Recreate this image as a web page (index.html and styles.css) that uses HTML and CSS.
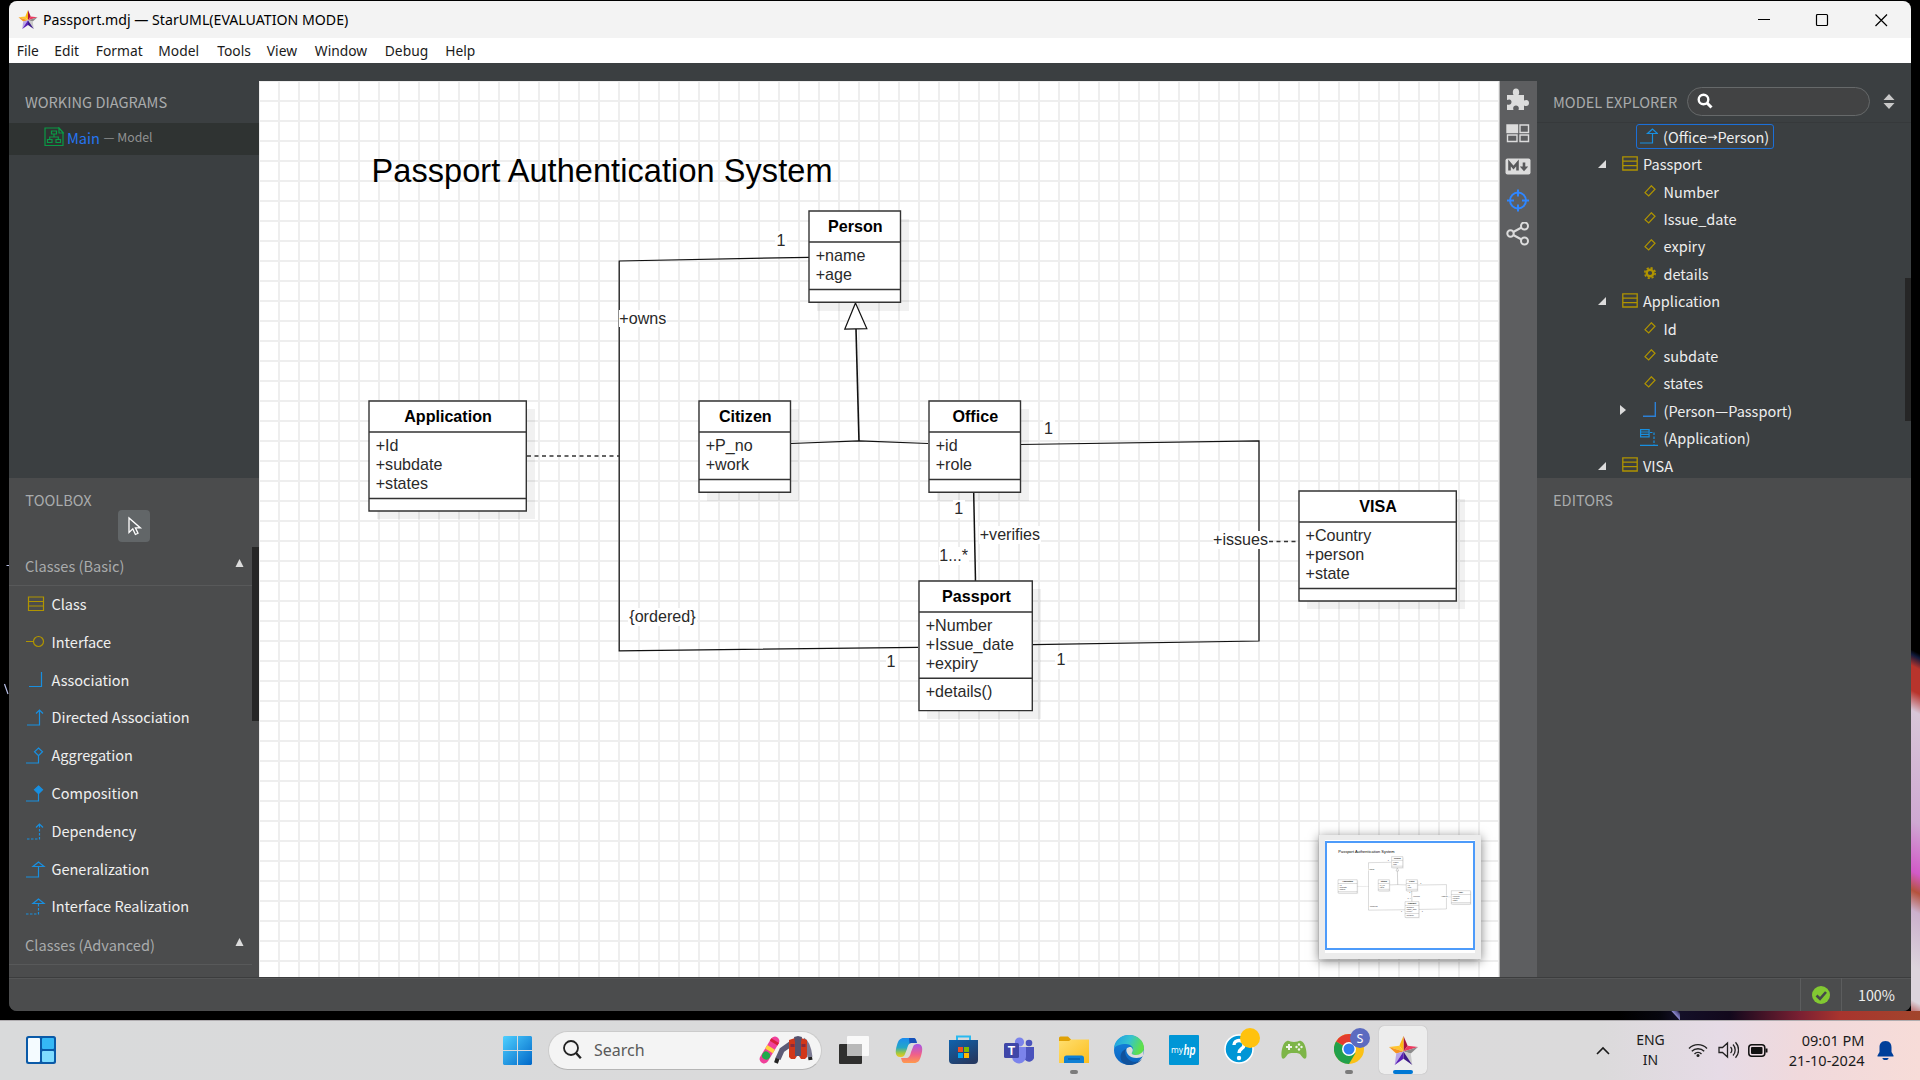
FILE: index.html
```html
<!DOCTYPE html>
<html lang="en">
<head>
<meta charset="utf-8">
<title>Passport.mdj — StarUML</title>
<link rel="stylesheet" href="styles.css">
</head>
<body>
<svg width="0" height="0" class="defs" aria-hidden="true">
  <defs>
    <linearGradient id="gWin" x1="0" y1="0" x2="1" y2="1"><stop offset="0" stop-color="#4fd0ff"/><stop offset="1" stop-color="#0067c8"/></linearGradient>
    <linearGradient id="gStore" x1="0" y1="0" x2=".6" y2="1"><stop offset="0" stop-color="#0f63ae"/><stop offset="1" stop-color="#253a63"/></linearGradient>
    <linearGradient id="gFold" x1="0" y1="0" x2="1" y2="1"><stop offset="0" stop-color="#ffdf70"/><stop offset="1" stop-color="#fcbe1e"/></linearGradient>
    <linearGradient id="gEdge" x1="0" y1="0" x2="1" y2=".3"><stop offset="0" stop-color="#1b9be6"/><stop offset=".55" stop-color="#35c3cf"/><stop offset="1" stop-color="#5fe04a"/></linearGradient>
    <linearGradient id="gEdge2" x1="0" y1="0" x2="0" y2="1"><stop offset="0" stop-color="#1687e0"/><stop offset="1" stop-color="#0b63c0"/></linearGradient>
    <linearGradient id="gCopA" x1="0" y1="0" x2="0" y2="1"><stop offset="0" stop-color="#1a8bf0"/><stop offset=".5" stop-color="#25a7c6"/><stop offset=".8" stop-color="#a5c93c"/><stop offset="1" stop-color="#f2c525"/></linearGradient>
    <linearGradient id="gCopB" x1="0" y1="0" x2="0" y2="1"><stop offset="0" stop-color="#a656e8"/><stop offset=".55" stop-color="#f0608a"/><stop offset="1" stop-color="#ff9a4c"/></linearGradient>
    <symbol id="star" viewBox="0 0 28 28">
      <path d="M14 0 18 9.500 14 15z" fill="#a8123f"/><path d="M14 0 10 9.500 14 15z" fill="#fdb913"/>
      <path d="M0 10.500 10 9.500 14 15z" fill="#ffc52e"/><path d="M0 10.500 7 17 14 15z" fill="#f7941e"/>
      <path d="M28 10.500 18 9.500 14 15z" fill="#ee3a5f"/><path d="M28 10.500 21 17 14 15z" fill="#8b8b8b"/>
      <path d="M5.500 28 7 17 14 15z" fill="#b9a5e6"/><path d="M5.500 28 14 22 14 15z" fill="#5a1fb8"/>
      <path d="M22.500 28 21 17 14 15z" fill="#c9c9c9"/><path d="M22.500 28 14 22 14 15z" fill="#3c1a86"/>
    </symbol>
    <symbol id="i-class" viewBox="0 0 16 15"><path d="M.8.800h14.400v13.200H.8zM.8 5.200h14.400M.8 9.600h14.400" fill="none" stroke="#b09400" stroke-width="1.300"/></symbol>
    <symbol id="i-attr" viewBox="0 0 12 12"><path d="M7.300.800 11 4.200 4.700 11 1 7.600z" fill="none" stroke="#b09400" stroke-width="1.200"/></symbol>
    <symbol id="i-gen" viewBox="0 0 18 16"><path d="M0 15h12.500V5.500M12.500 1 7.500 5.500h10z" fill="none" stroke="#188fe0" stroke-width="1.200"/></symbol>
    <symbol id="i-assoc" viewBox="0 0 13 15"><path d="M0 14.200h12.300V0" fill="none" stroke="#2c80d6" stroke-width="1.400"/></symbol>
    <symbol id="open" viewBox="0 0 8 8"><path d="M8 0v8H0z" fill="#dcdcdc"/></symbol>
    <symbol id="up" viewBox="0 0 9 9"><path d="M4.500 0 9 9H0z" fill="#dcdcdc"/></symbol>
  </defs>
</svg>
<svg class="wall-left" width="9" height="250" fill="none" stroke="#b9c0e8" stroke-width="1.200"><path d="M6.500 5.500H9M4.500 124l3.500 10M8.500 251v3"/></svg>

<div class="window">
  <header class="titlebar">
    <svg class="app-icon" width="20" height="19"><use href="#star"/></svg>
    <span class="title">Passport.mdj — StarUML(EVALUATION MODE)</span>
    <div class="controls">
      <svg width="14" height="14"><path d="M1 6.500h12" stroke="#000" stroke-width="1.200"/></svg>
      <svg width="14" height="14"><rect x="1.500" y="1.500" width="11" height="11" rx="1" fill="none" stroke="#000" stroke-width="1.200"/></svg>
      <svg width="14" height="14"><path d="M1.500 1.500l11.500 11.500M13 1.500 1.500 13" stroke="#000" stroke-width="1.200"/></svg>
    </div>
  </header>
  <nav class="menubar"><span>File</span><span>Edit</span><span>Format</span><span>Model</span><span>Tools</span><span>View</span><span>Window</span><span>Debug</span><span>Help</span></nav>

  <main class="body">
    <aside class="left">
      <section class="working">
        <h2>WORKING DIAGRAMS</h2>
        <div class="wd-row">
          <svg width="20" height="20" fill="none" stroke="#0a9a45" stroke-width="1.200"><path d="M15 1H1v17.500h18V6M15 1v5h4.500zM15 1l4.500 5" /><path d="M7.500 4h5v3h-5zM3.500 12.500h4.500v3H3.500zM12 12.500h4.500v3H12zM10 7v3M5.700 12.500V10h8.600v2.500"/></svg>
          <span class="main">Main</span><span class="model">— Model</span>
        </div>
      </section>
      <section class="toolbox">
        <h2>TOOLBOX</h2>
        <div class="cursor"><svg width="16" height="20"><path d="M2 2v14.500l3.800-3.600 2.600 5.600 2.600-1.200-2.600-5.400h5z" fill="none" stroke="#fff" stroke-width="1.300"/></svg></div>
        <div class="tools">
          <h3>Classes (Basic)<svg width="9" height="8"><use href="#up"/></svg></h3>
          <ul>
            <li><svg viewBox="0 0 20 18"><path d="M2.500 2h15v13.500h-15zM2.500 6.500h15M2.500 11h15" stroke="#b09400"/></svg>Class</li>
            <li><svg viewBox="0 0 20 18"><path d="M0 8.500h7M17.500 8.500a5 5 0 1 1-10 0 5 5 0 0 1 10 0z" stroke="#b09400"/></svg>Interface</li>
            <li><svg viewBox="0 0 20 18"><path d="M3 15.500h12.500V1"/></svg>Association</li>
            <li><svg viewBox="0 0 20 18"><path d="M1 17h12.500V2M10 5.500 13.500 2 17 5.500"/></svg>Directed Association</li>
            <li><svg viewBox="0 0 20 18"><path d="M0 17h12.500V9.500M12.500 2l4 3.800-4 3.800-4-3.800z"/></svg>Aggregation</li>
            <li><svg viewBox="0 0 20 18"><path d="M0 17h12.500V9.500"/><path d="M12.500 2l4 3.800-4 3.800-4-3.800z" fill="#188fe0"/></svg>Composition</li>
            <li><svg viewBox="0 0 20 18"><path d="M1 17h12.500V2" stroke-dasharray="2.500 1.500"/><path d="M10 5.500 13.500 2 17 5.500"/></svg>Dependency</li>
            <li><svg viewBox="0 0 20 18"><path d="M0 17h12.500V6.500M12.500 2 7 6.500h11z"/></svg>Generalization</li>
            <li><svg viewBox="0 0 20 18"><path d="M0 17h12.500V6.500" stroke-dasharray="2.500 1.500"/><path d="M12.500 2 7 6.500h11z"/></svg>Interface Realization</li>
          </ul>
          <h3 class="adv">Classes (Advanced)<svg width="9" height="8"><use href="#up"/></svg></h3>
          <i class="thumb"></i>
        </div>
      </section>
    </aside>

    <div class="canvas">
      <svg class="diagram" viewBox="259 81 1240 896" width="1240" height="896">
        <g id="dia">
          <text class="dt" x="371.500" y="181.500" textLength="461">Passport Authentication System</text>
          <g class="sh">
            <rect x="817" y="219" width="92" height="92"/><rect x="377" y="409" width="158" height="110"/><rect x="707" y="409" width="92" height="92"/>
            <rect x="937" y="409" width="92" height="92"/><rect x="927" y="589" width="114" height="130"/><rect x="1307" y="499" width="158" height="110"/>
          </g>
          <g class="ln">
            <path d="M809 257.300 619.200 261V650.800L918 647.300"/>
            <path d="M1021 444.500 1259 441V641L1033 644.700"/>
            <path d="M973.700 493 975.500 581" stroke-width="1.500"/>
            <path d="M791 443.500 859 441 928 443.500"/>
            <path d="M856 329 859 441" stroke-width="1.600"/>
            <path class="dash" d="M527 456H619M1269 541.500H1299"/>
            <path d="M855.500 303 844.800 329 866.800 328.600z" fill="#fff"/>
          </g>
          <g class="bx">
            <path d="M809 211h91.500v91.200H809zM809 242h91.500M809 289.500h91.500"/>
            <path d="M369 401h157.300v110H369zM369 432h157.300M369 498.500h157.300"/>
            <path d="M699 401h91.500v91.200H699zM699 432h91.500M699 479.500h91.500"/>
            <path d="M929 401h91.500v91.200H929zM929 432h91.500M929 479.500h91.500"/>
            <path d="M919 581h113.300v129.600H919zM919 612h113.300M919 678.300h113.300"/>
            <path d="M1299 491h157.300v110H1299zM1299 522h157.300M1299 588.500h157.300"/>
          </g>
          <g class="mask">
            <rect x="619" y="310" width="48" height="17"/><rect x="1213" y="531" width="56" height="18"/>
            <rect x="775" y="231" width="12" height="18"/><rect x="628" y="608" width="69" height="18"/><rect x="886" y="653" width="12" height="18"/>
            <rect x="1055" y="651" width="12" height="18"/><rect x="1043" y="420" width="12" height="18"/><rect x="953" y="500" width="12" height="18"/>
            <rect x="939" y="547" width="30" height="18"/><rect x="979" y="526" width="62" height="18"/>
          </g>
          <g class="hd">
            <text x="855.300" y="232">Person</text><text x="448" y="422">Application</text><text x="745.300" y="422">Citizen</text>
            <text x="975.300" y="422">Office</text><text x="976.500" y="602">Passport</text><text x="1378" y="512">VISA</text>
          </g>
          <g class="tx">
            <text x="815.700" y="261">+name</text><text x="815.700" y="280">+age</text>
            <text x="375.700" y="451">+Id</text><text x="375.700" y="470">+subdate</text><text x="375.700" y="489">+states</text>
            <text x="705.700" y="451">+P_no</text><text x="705.700" y="470">+work</text>
            <text x="935.700" y="451">+id</text><text x="935.700" y="470">+role</text>
            <text x="925.700" y="631">+Number</text><text x="925.700" y="650">+Issue_date</text><text x="925.700" y="669">+expiry</text><text x="925.700" y="697">+details()</text>
            <text x="1305.500" y="541">+Country</text><text x="1305.500" y="560">+person</text><text x="1305.500" y="579">+state</text>
            <text x="619.300" y="324">+owns</text><text x="776.500" y="246">1</text><text x="629.300" y="622">{ordered}</text><text x="886.500" y="667">1</text>
            <text x="1056.500" y="665">1</text><text x="1044" y="434">1</text><text x="954.300" y="514">1</text><text x="939.300" y="561">1...*</text>
            <text x="979.700" y="540">+verifies</text><text x="1213" y="545">+issues</text>
          </g>
        </g>
      </svg>
      <div class="minimap">
        <svg viewBox="1325 840 150 113" width="150" height="113">
          <rect x="1325" y="840" width="150" height="113" fill="#fff"/>
          <use class="mini" href="#dia" transform="translate(1293.100 830.900) scale(.1218)"/>
          <rect x="1326" y="842" width="148" height="107" fill="none" stroke="#4d9bfa" stroke-width="2"/>
        </svg>
      </div>
    </div>

    <div class="strip">
      <svg width="24" height="24" fill="#dcdcdc"><path d="M1 8h6.500C6 5 7 1.500 10 1.500S14 5 12.500 8H18v5.500c3-1.500 5 0 5 2.500s-2 4-5 2.500V23h-5.500c1-3-.5-4.500-2.500-4.500S6.500 20 7.500 23H1v-5.500c3 1 4.500-.5 4.500-2.500S4 11.500 1 13z"/></svg>
      <svg width="24" height="24" fill="none" stroke="#dcdcdc" stroke-width="1.400"><path d="M1 4h10.500v7.500H1z" fill="#dcdcdc"/><path d="M14 4h8.500v7.500H14zM1.500 14h9.500v6.500H1.500zM14 14h8.500v6.500H14z"/></svg>
      <svg width="26" height="24"><rect x=".5" y="4.500" width="25" height="16" rx="2" fill="#dcdcdc"/><path d="M4.500 16.500V9L8.500 13.500l4-4.500V16.500M19 8.500v5" fill="none" stroke="#58595b" stroke-width="2.600"/><path d="M14.800 12.500h8.400L19 17.300z" fill="#58595b"/></svg>
      <svg width="24" height="24" fill="none" stroke="#2f86ff" stroke-width="2"><circle cx="12" cy="12.500" r="8"/><path d="M12 1.500v7M12 16.500v7M1 12.500h7M16 12.500h7"/></svg>
      <svg width="24" height="24" fill="none" stroke="#dcdcdc" stroke-width="2"><circle cx="4.500" cy="11.500" r="3.200"/><circle cx="18.500" cy="4" r="3.500"/><circle cx="18.500" cy="19" r="3.500"/><path d="M7.300 10 15.500 5.500M7.300 13 15.500 17.500"/></svg>
    </div>

    <aside class="right">
      <section class="explorer">
        <div class="ex-head">
          <h2>MODEL EXPLORER</h2>
          <div class="search"><svg width="16" height="16" fill="none" stroke="#fff"><circle cx="6.500" cy="6.500" r="4.800" stroke-width="2.400"/><path d="M10 10l4.500 4.500" stroke-width="3"/></svg></div>
          <svg class="sort" width="12" height="15" fill="#c8c8c8"><path d="M6 0l5.500 6H.5zM6 15l5.500-6H.5z"/></svg>
        </div>
        <div class="tree">
          <div class="row l3"><span class="sel"><svg width="18" height="16"><use href="#i-gen"/></svg>(Office<span class="arr">→</span>Person)</span></div>
          <div class="row l1"><svg class="tw" width="8" height="8"><use href="#open"/></svg><svg class="ci" width="16" height="15"><use href="#i-class"/></svg>Passport</div>
          <div class="row l2"><svg class="at" width="12" height="12"><use href="#i-attr"/></svg>Number</div>
          <div class="row l2"><svg class="at" width="12" height="12"><use href="#i-attr"/></svg>Issue_date</div>
          <div class="row l2"><svg class="at" width="12" height="12"><use href="#i-attr"/></svg>expiry</div>
          <div class="row l2"><svg class="at" width="12" height="12" fill="none" stroke="#b09400"><circle cx="6" cy="6" r="3.300" stroke-width="2.400"/><circle cx="6" cy="6" r="5.200" stroke-width="1.600" stroke-dasharray="2.200 1.880"/></svg>details</div>
          <div class="row l1"><svg class="tw" width="8" height="8"><use href="#open"/></svg><svg class="ci" width="16" height="15"><use href="#i-class"/></svg>Application</div>
          <div class="row l2"><svg class="at" width="12" height="12"><use href="#i-attr"/></svg>Id</div>
          <div class="row l2"><svg class="at" width="12" height="12"><use href="#i-attr"/></svg>subdate</div>
          <div class="row l2"><svg class="at" width="12" height="12"><use href="#i-attr"/></svg>states</div>
          <div class="row l4"><svg class="cl" width="6" height="10"><path d="M0 0l6 5-6 5z" fill="#dcdcdc"/></svg><svg class="as" width="13" height="15"><use href="#i-assoc"/></svg>(Person—Passport)</div>
          <div class="row l5"><svg class="ac" width="18" height="17" fill="none" stroke="#188fe0" stroke-width="1.200"><path d="M.6.600h8.500v7.200H.6zM.6 3h8.500M.6 5.400h8.500M0 16.300h18"/><path d="M10 3.500h4v12.500" stroke-dasharray="2.500 1.500"/></svg>(Application)</div>
          <div class="row l1"><svg class="tw" width="8" height="8"><use href="#open"/></svg><svg class="ci" width="16" height="15"><use href="#i-class"/></svg>VISA</div>
          <i class="thumb"></i>
        </div>
      </section>
      <section class="editors"><h2>EDITORS</h2></section>
    </aside>
  </main>

  <footer class="status">
    <div class="ok"><svg width="18" height="18"><circle cx="9" cy="9" r="9" fill="#82c832"/><path d="M4.500 9.500 8 12.800 14 6" fill="none" stroke="#45484a" stroke-width="2.600"/></svg></div>
    <div class="zoom">100%</div>
  </footer>
</div>

<div class="taskbar">
  <svg class="widgets" width="30" height="28"><rect width="30" height="28" rx="2.500" fill="#0a5aa8"/><rect x="2" y="2" width="12" height="24" rx="1" fill="#f4fbff"/><rect x="16" y="2" width="12" height="11" rx="1" fill="#35b8f5"/><rect x="16" y="15" width="12" height="11" rx="1" fill="#7fdcff"/></svg>
  <svg class="start" width="29" height="29" fill="url(#gWin)"><path d="M1 0h13v14H0V1zM15 0h13l1 1v13H15zM0 15h14v14H1l-1-1zM15 15h14v13l-1 1H15z"/></svg>
  <div class="tsearch">
    <svg width="19" height="20" fill="none" stroke="#222"><circle cx="8" cy="8" r="7" stroke-width="1.800"/><path d="M12.800 12.800l5 5.500" stroke-width="2.400"/></svg>
    <span>Search</span>
    <svg class="promo" width="54" height="28">
      <g transform="rotate(31 10.500 14)"><rect x="6" y="-1" width="9" height="30" rx="4.500" fill="#f0409a"/><path d="M6 3h9v3H6z" fill="#d8203c"/><path d="M6 11h9v4H6z" fill="#ffd23e"/><circle cx="10.500" cy="20.500" r="4" fill="#1faa4c"/></g>
      <path d="M33 7 23 14l-4 9" stroke="#5c5a76" stroke-width="5.500" fill="none"/><path d="M18.500 22.500l-1.500 4.500" stroke="#222" stroke-width="4"/>
      <path d="M44 4c4 2 6 9 7 17" stroke="#7b7a92" stroke-width="5" fill="none"/><path d="M51 21l.5 3" stroke="#222" stroke-width="4"/>
      <path d="M30 4l9-3 9 3v17l-2 2h-4l-2-3h-2l-2 3h-4l-2-2z" fill="#d1371a"/><path d="M35 1l4-1 4 1-1 5v14h-6V6z" fill="#55526e"/><path d="M31.500 8h4v3h-4zM42.500 8h4v3h-4z" fill="#8a2a3a"/>
    </svg>
  </div>
  <div class="apps">
    <div class="app"><svg width="30" height="28"><rect y="8" width="23" height="20" rx="1" fill="#2f2f2e"/><rect x="8" width="22" height="20" rx="1" fill="#fff" fill-opacity=".82"/><rect x="8" y="8" width="15" height="12" fill="#b9b9b9"/></svg></div>
    <div class="app"><svg width="28" height="27"><path d="M9 1h9c3 0 3 2 4 5h-5c-3 0-4 2-5 6l-2 5c-1 3-3 3-5 3C0 20 0 14 2 8 3.500 3 5 1 9 1z" fill="url(#gCopA)"/><path d="M14 1h4c3 0 3 2 4 5h-5c-1 0-2 0-2.500.5z" fill="#1650b8"/><path d="M19 26h-9c-3 0-3-2-4-5h5c3 0 4-2 5-6l2-5c1-3 3-3 5-3 5 0 5 6 3 12-1.500 5-3 7-7 7z" fill="url(#gCopB)"/></svg></div>
    <div class="app"><svg width="30" height="30"><path d="M8 6V1.500h13V6" fill="none" stroke="#2bb9f0" stroke-width="2"/><path d="M0 5h29v20a4 4 0 0 1-4 4H4a4 4 0 0 1-4-4z" fill="url(#gStore)"/><path d="M9 12h5v5H9z" fill="#f25022"/><path d="M15 12h5v5h-5z" fill="#7fba00"/><path d="M9 18h5v5H9z" fill="#00a4ef"/><path d="M15 18h5v5h-5z" fill="#ffb900"/></svg></div>
    <div class="app"><svg width="30" height="27"><circle cx="25" cy="6" r="3.300" fill="#4b53bc"/><path d="M20 10h10v8a5 5 0 0 1-10 3z" fill="#4b53bc"/><circle cx="15.500" cy="5" r="4.600" fill="#7b83eb"/><path d="M8 10h14v9a7 7 0 0 1-14 1z" fill="#7b83eb"/><rect y="6" width="15" height="15" rx="1.500" fill="#3f46a8"/><text class="tt" x="7.500" y="17.500">T</text></svg></div>
    <div class="app run"><svg width="30" height="28"><path d="M0 2a1.500 1.500 0 0 1 1.500-1.500H9l3 3V9H0z" fill="#e0a106"/><path d="M0 5h10l2-1.500h18V27H0z" fill="url(#gFold)"/><path d="M5 27v-5a2.500 2.500 0 0 1 2.500-2.500h15A2.500 2.500 0 0 1 25 22v5z" fill="#1080d4"/><path d="M9 23h12" stroke="#0a569a" stroke-width="1.200"/></svg></div>
    <div class="app"><svg width="30" height="30"><circle cx="15" cy="15" r="15" fill="url(#gEdge2)"/><path d="M0 13C1 4 8 0 15 0c9 0 15 6 15 13 0 5-4 7-8 7-3 0-5-1-4-2.500 3-4-.5-8.500-6-8.500-6 0-10 2-12 4z" fill="url(#gEdge)"/><path d="M12 14c-3 6 3 13 9 13 3 0 5-1 7-3-3 4-8 6-13 6C9 30 5 24 7 19c1-3 3-4 5-5z" fill="#10529c"/><path d="M12.500 14c-1 4 3 9 10 9 3 0 5-1 7-2V15l-1 2c-2 2-4 3-6.500 3-3 0-5-1-4-2.500 1.500-2 1-4-1-5.500-2 0-4 .5-4.500 2z" fill="#dcdcdc"/></svg></div>
    <div class="app"><svg width="30" height="30"><rect width="30" height="30" rx="1" fill="#0096d6"/><text class="my" x="2" y="17.500" textLength="12" lengthAdjust="spacingAndGlyphs">my</text><text class="hp" x="14.500" y="19.500" textLength="12" lengthAdjust="spacingAndGlyphs">hp</text></svg></div>
    <div class="app"><svg class="wide" width="36" height="36"><circle cx="15" cy="21" r="14" fill="#0096d6" stroke="#fff" stroke-width="1.500"/><path d="M10 17c0-6 10-6 10 0 0 4-5 3.500-5 8" fill="none" stroke="#fff" stroke-width="3.400"/><circle cx="15" cy="30" r="2.200" fill="#fff"/><circle cx="26" cy="10" r="10" fill="#ffc20e"/></svg></div>
    <div class="app"><svg width="28" height="22"><path d="M7 2c2-1 3 1 7 1s5-2 7-1c4 1 6 10 5.500 15-.3 4-3 3-5 0-2-3-3-3-7.500-3s-5.500 0-7.500 3-4.700 4-5 0C1 12 3 3 7 2z" fill="#7db548"/><path d="M6 8h6M9 5v6" stroke="#f0f5ea" stroke-width="2"/><g fill="#f0f5ea"><circle cx="19" cy="5.500" r="1.200"/><circle cx="19" cy="10.500" r="1.200"/><circle cx="16.500" cy="8" r="1.200"/><circle cx="21.500" cy="8" r="1.200"/></g></svg></div>
    <div class="app run"><svg class="wide" width="36" height="36"><circle cx="15" cy="21" r="15" fill="#fbc116"/><path d="M15 21 2 13.500A15 15 0 0 1 28 13.500z" fill="#e33b2e"/><path d="M15 21 2 13.500A15 15 0 0 0 15 36l6.500-11z" fill="#21a04b"/><circle cx="15" cy="21" r="7" fill="#fff"/><circle cx="15" cy="21" r="5.500" fill="#2f7df0"/><circle cx="26" cy="10" r="10" fill="#5c6bc0"/><text class="ss" x="26" y="14.500">S</text></svg></div>
    <div class="app active"><svg width="29" height="29"><use href="#star"/></svg></div>
  </div>
  <div class="tray">
    <svg class="caret" width="14" height="9"><path d="M1 8l6-6 6 6" fill="none" stroke="#1a1a1a" stroke-width="1.600"/></svg>
    <div class="lang">ENG<br>IN</div>
    <svg class="wifi" width="20" height="16" fill="none" stroke="#222" stroke-width="1.400"><path d="M1 6.500a12.500 12.500 0 0 1 18 0M3.800 9.300a8.700 8.700 0 0 1 12.400 0M6.500 12a5 5 0 0 1 7 0"/><circle cx="10" cy="13.500" r="1.500" fill="#222" stroke="none"/></svg>
    <svg class="vol" width="21" height="18" fill="none" stroke="#222" stroke-width="1.300"><path d="M1 6.500h3.500L9.500 2v14l-5-4.500H1zM12.500 6a4 4 0 0 1 0 6M15 3.500a8 8 0 0 1 0 11M17.500 1.200a11.500 11.500 0 0 1 0 15.600"/></svg>
    <svg class="bat" width="20" height="13"><rect x=".8" y=".8" width="16" height="11.400" rx="3" fill="none" stroke="#111" stroke-width="1.500"/><rect x="3" y="3" width="11.500" height="7" rx="1" fill="#111"/><path d="M18.500 4.500v4" stroke="#111" stroke-width="2"/></svg>
    <div class="clock">09:01 PM<br>21-10-2024</div>
    <svg class="bell" width="17" height="19" fill="#003f9a"><path d="M8.500 0C4 0 2.500 3 2.500 6.500V11L.5 14.500v1h16v-1l-2-3.500V6.500C14.500 3 13 0 8.500 0zM5.500 17a3 2 0 0 0 6 0z"/></svg>
  </div>
</div>
</body>
</html>
```
FILE: styles.css
```css
* { box-sizing: border-box; }
html, body { margin: 0; height: 1080px; overflow: hidden; }
body {
  font-family: "Noto Sans CJK SC", "Open Sans", sans-serif;
  font-size: 14.6px;
  line-height: 20px;
  padding-top: 1px;
  display: flex;
  flex-direction: column;
  background:
    linear-gradient(207deg, transparent 0 8px, #101a3c 12px, #b8342c 22px 44px, #d8c6d8 62px, #cfa8d2 160px, #d25ac8 205px, #b5523c 222px, #ccb0cc 240px, #dcd4dc 290px, #dcd4dc 320px, #b86060 332px) 1911px 645px / 9px 366px no-repeat,
    linear-gradient(48deg, transparent 14px, #8a86c8 15px, #55508c 18px, transparent 20px) 1660px 1011px / 20px 9px no-repeat,
    linear-gradient(90deg, #000, #06060e 40px, #141028 60px, #12081c 110px, #7a2032 180px, #a8342e 220px, #a2452c 300px, #c0705a) 1620px 1011px / 300px 9px no-repeat,
    #000;
}
.defs { position: absolute; }
.wall-left { position: absolute; left: 0; top: 560px; }
svg { display: block; flex: none; }
h2, h3 { margin: 0; font-size: 14.6px; font-weight: 400; color: #a9abac; line-height: 20px; }

.window {
  width: 1902px; height: 1010px; margin-left: 9px;
  border-radius: 8px; overflow: hidden;
  display: flex; flex-direction: column;
  background: #3b3f41;
}
.titlebar { height: 37px; background: #f3f3f3; display: flex; align-items: center; padding-left: 9px; color: #000; font: 14.15px/20px "Noto Sans", sans-serif; }
.app-icon { margin-right: 5px; }
.controls { margin-left: auto; display: flex; gap: 44.500px; padding-right: 23.500px; }
.menubar {
  height: 25px; background: #fff; color: #1a1a1a; padding-left: 7.800px;
  display: grid; grid-template-columns: 37.500px 41.500px 62.500px 59px 49.500px 48px 70px 60.500px 40px;
  align-items: center; font: 13.800px/20px "Noto Sans", sans-serif;
}
.body { height: 914px; padding-top: 18px; display: flex; }

.left { width: 250px; margin-top: -18px; display: flex; flex-direction: column; }
.working { height: 415px; padding-top: 29px; }
.working h2 { padding: 0 0 0 16px; }
.wd-row { height: 32px; margin-top: 11px; background: #2f3332; display: flex; padding: 4px 0 0 35px; }
.wd-row span { line-height: 21px; }
.main { color: #2575f0; margin-left: 3px; }
.model { color: #8f9191; font-size: 12.300px; margin-left: 3.500px; }
.toolbox { height: 499px; background: #4b4c4d; display: flex; flex-direction: column; }
.toolbox h2 { padding: 12px 0 0 16.300px; }
.cursor { width: 32px; height: 32px; margin: 0 auto 0 109px; padding-left: 2px; background: #626668; border-radius: 4px; display: grid; place-items: center; }
.tools { position: relative; padding-top: 14px; }
.tools h3 { width: 243px; height: 30px; padding: 0 8px 0 16px; display: flex; justify-content: space-between; border-bottom: 1px solid #58595a; }
.tools h3 svg { margin-top: 3px; }
.tools .adv { height: 39px; padding-top: 9px; }
.tools ul { list-style: none; margin: 0; padding: 0; }
.tools li { position: relative; top: -.8px; height: 37.800px; display: flex; align-items: center; padding: 0 0 0 17px; gap: 5.500px; color: #f0f0f0; font-size: 14.500px; }
.tools li svg { width: 20px; height: 18px; fill: none; stroke: #188fe0; stroke-width: 1.200; }
.thumb { position: absolute; right: 0; width: 7px; background: #262626; }
.tools .thumb { top: 5px; height: 174px; }

.canvas {
  position: relative; width: 1240px; height: 896px;
  background:
    linear-gradient(90deg, #eee 2px, transparent 2px) -1px 0 / 20px 20px,
    linear-gradient(#eee 2px, transparent 2px) 0 -1px / 20px 20px,
    #fff;
}
.diagram text, .mini text { font-family: "Liberation Sans", Arial, sans-serif; font-size: 16.100px; fill: #2a2a2a; }
.diagram .dt { font-size: 32.500px; fill: #000; }
.diagram .hd text { font-weight: 700; text-anchor: middle; fill: #000; }
.sh { fill: #000; fill-opacity: .055; }
.ln { fill: none; stroke: #111; stroke-width: 1.250; }
.dash { stroke: #333; stroke-dasharray: 4 3.500; stroke-width: 1.500; }
.bx { fill: #fff; stroke: #333; stroke-width: 1.400; }
.mask { fill: #fff; }
.minimap { position: absolute; left: 1060px; top: 754px; width: 162px; height: 124px; padding: 5px 6px; background: #ececec; box-shadow: 0 2px 10px rgba(0, 0, 0, .5); }

.strip { width: 38px; border-left: 1px solid #b5b5b5; background: #5d5e60; display: flex; flex-direction: column; align-items: center; gap: 9.700px; padding: 6px 2px 0 0; }

.right { width: 374px; margin-top: -18px; display: flex; flex-direction: column; }
.explorer { height: 415px; display: flex; flex-direction: column; }
.ex-head { height: 60px; padding: 24px 16px 7px 16px; display: flex; align-items: center; border-bottom: 1px solid #36393b; }
.ex-head h2 { width: 134px; white-space: nowrap; padding-top: 1px; }
.search { width: 183px; height: 29px; border: 1px solid #66696a; border-radius: 15px; background: #424344; display: flex; align-items: center; padding-left: 9px; }
.sort { margin-left: auto; }
.tree { position: relative; height: 355px; overflow: hidden; color: #eee; font-size: 14.500px; }
.tree .thumb { top: 155px; height: 143px; width: 6px; }
.row { height: 27.420px; display: flex; align-items: center; }
.row svg { position: relative; top: -1px; }
.l1 { padding-left: 61px; }
.l1 .tw { margin-right: 16px; top: 0; }
.l1 .ci { margin-right: 5px; }
.l2 { padding-left: 107px; }
.l2 .at { margin-right: 7.500px; }
.l3 { padding-left: 99px; }
.sel { height: 25px; width: 138px; border: 1px solid #1b6fd8; border-radius: 3px; display: flex; align-items: center; padding-left: 3px; line-height: 22px; }
.sel svg { margin-right: 5px; }
.arr { font: 12.500px/20px "DejaVu Sans", sans-serif; }
.l4 { padding-left: 83px; }
.l4 .cl { margin-right: 17px; }
.l4 .as { margin-right: 7.500px; }
.l5 { padding-left: 103px; }
.l5 .ac { margin-right: 5.500px; }
.editors { flex: 1; background: #4b4c4d; padding: 12px 0 0 16px; }

.status { height: 34px; background: #4b4c4d; border-top: 1px solid #3c3d3e; box-shadow: inset 0 1px #555657; display: flex; justify-content: flex-end; color: #eee; font-size: 14.300px; }
.ok { width: 41px; border-left: 1px solid #5c5d5e; display: grid; place-items: center; }
.zoom { width: 70px; border-left: 1px solid #5c5d5e; display: grid; place-items: center; }

.taskbar {
  height: 60px; margin-top: 9px; border-top: 1px solid #b0adb0; display: flex; align-items: center; padding-bottom: 1px;
  background: linear-gradient(90deg, #d9dadb 0, #dbdadb 1600px, #e6dbe6 1720px, #f0d9dc 1800px, #f7dcd8 1920px);
}
.widgets { margin-left: 26px; }
.start { margin-left: 447px; }
.tsearch { width: 274px; height: 39px; margin-left: 16px; border-radius: 20px; background: #f4f4f4; border: 1px solid #cbcbcb; border-bottom-color: #b5b5b5; display: flex; align-items: center; padding: 0 8px 0 14px; font: 16px/22px "Noto Sans", sans-serif; color: #5a5a5a; }
.tsearch span { margin-left: 12px; }
.promo { margin-left: auto; }
.apps { display: flex; margin-left: 4px; height: 60px; align-items: center; }
.app { position: relative; width: 55.050px; height: 48px; display: grid; place-items: center; }
.app .wide { margin: -8px -6px 0 0; }
.run::after { content: ""; position: absolute; left: 24px; bottom: 0; width: 8px; height: 4px; border-radius: 2px; background: #7b7b7b; }
.active { width: 48px; margin-left: 3px; border-radius: 5px; background: #ededed; box-shadow: 0 0 1px #999; }
.active::after { content: ""; position: absolute; left: 14px; bottom: 0; width: 20px; height: 4px; border-radius: 2px; background: #0078d4; }
.tt { font: 700 12px "Liberation Sans", sans-serif; fill: #fff; text-anchor: middle; }
.my { font: 9px "Noto Sans", sans-serif; fill: #fff; }
.hp { font: italic 700 14px "Liberation Sans", sans-serif; fill: #fff; }
.ss { font: 12.500px "Noto Sans", sans-serif; fill: #fff; text-anchor: middle; }
.tray { margin-left: auto; padding-right: 26.500px; display: flex; align-items: center; color: #1a1a1a; font: 14.500px/20px "Noto Sans", sans-serif; }
.lang { width: 30px; margin: 0 22px 0 26px; text-align: center; font-size: 14px; }
.vol { margin: 0 9px 0 10px; }
.clock { width: 80px; margin: 0 12px 0 17px; text-align: right; white-space: nowrap; }
```
